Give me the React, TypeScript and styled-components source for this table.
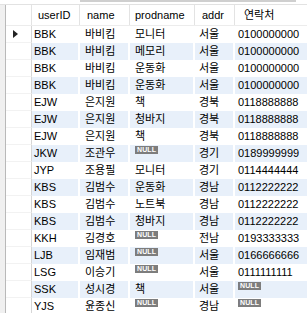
import React from "react";
import styled, { createGlobalStyle } from "styled-components";

const GlobalStyle = createGlobalStyle`
  html, body {
    margin: 0;
    padding: 0;
    background: #ffffff;
    overflow: hidden;
  }
  body {
    font-family: "Liberation Sans", "Noto Sans CJK KR", sans-serif;
    font-size: 11px;
    color: #000;
  }
`;

const TEMPLATE = "26px 48px 50px 65px 40px 1fr";

const Frame = styled.div`
  width: 307px;
  height: 313px;
  display: flex;
  flex-direction: column;
  overflow: hidden;
`;

const TopEdge = styled.div`
  height: 4px;
  flex-shrink: 0;
  display: flex;
  border-bottom: 1px solid #e2e2e2;
  background: #ffffff;
`;

const ScrollThumb = styled.div`
  margin-left: 80px;
  width: 216px;
  height: 2px;
  background: #cfcfcf;
`;

const Body = styled.div`
  flex: 1;
  display: flex;
  min-height: 0;
`;

const LeftStrip = styled.div`
  width: 5px;
  flex-shrink: 0;
  background: #f0f0f0;
  border-right: 1px solid #b9b9b9;
`;

const Grid = styled.div`
  flex: 1;
  display: flex;
  flex-direction: column;
  min-width: 0;
`;

const HeaderRow = styled.div`
  display: grid;
  grid-template-columns: ${TEMPLATE};
  height: 21px;
  flex-shrink: 0;
  background: #ffffff;
  border-bottom: 1px solid #ececec;
  box-sizing: border-box;
`;

const HeaderCell = styled.div<{ $pad: number }>`
  padding-left: ${(p) => p.$pad}px;
  line-height: 20px;
  white-space: nowrap;
  overflow: hidden;
  border-right: 1px solid #e3e3e3;

  &:last-child {
    border-right: none;
  }
`;

const Row = styled.div<{ $alt: boolean }>`
  display: grid;
  grid-template-columns: ${TEMPLATE};
  height: 17px;
  flex-shrink: 0;
  background: ${(p) => (p.$alt ? "#e8f0fa" : "#ffffff")};
`;

const RowHead = styled.div`
  background: #ffffff;
  border-right: 1px solid #d6d6d6;
  border-bottom: 1px solid #f2f2f2;
  box-sizing: border-box;
  display: flex;
  align-items: center;
  padding-left: 7px;
`;

const Cell = styled.div<{ $pad: number }>`
  padding-left: ${(p) => p.$pad}px;
  line-height: 17px;
  white-space: nowrap;
  overflow: hidden;
  border-right: 2px solid #ffffff;
  box-sizing: border-box;

  &:last-child {
    border-right: none;
  }
`;

const NullBadge = styled.span`
  display: inline-block;
  vertical-align: top;
  margin-top: 1px;
  height: 8px;
  padding: 0 2px;
  background: #7d7d7d;
  color: #ffffff;
  font-family: "Liberation Sans", sans-serif;
  font-weight: bold;
  font-size: 7px;
  line-height: 8px;
  letter-spacing: 0.1px;
`;

type Col = { key: string; label: string; head: number; cell: number };

const columns: Col[] = [
  { key: "userID", label: "userID", head: 6, cell: 2 },
  { key: "name", label: "name", head: 7, cell: 5 },
  { key: "prodname", label: "prodname", head: 5, cell: 5 },
  { key: "addr", label: "addr", head: 7, cell: 4 },
  { key: "phone", label: "연락처", head: 9, cell: 3 },
];

type Rec = Record<string, string | null>;

const rows: Rec[] = [
  { userID: "BBK", name: "바비킴", prodname: "모니터", addr: "서울", phone: "0100000000" },
  { userID: "BBK", name: "바비킴", prodname: "메모리", addr: "서울", phone: "0100000000" },
  { userID: "BBK", name: "바비킴", prodname: "운동화", addr: "서울", phone: "0100000000" },
  { userID: "BBK", name: "바비킴", prodname: "운동화", addr: "서울", phone: "0100000000" },
  { userID: "EJW", name: "은지원", prodname: "책", addr: "경북", phone: "0118888888" },
  { userID: "EJW", name: "은지원", prodname: "청바지", addr: "경북", phone: "0118888888" },
  { userID: "EJW", name: "은지원", prodname: "책", addr: "경북", phone: "0118888888" },
  { userID: "JKW", name: "조관우", prodname: null, addr: "경기", phone: "0189999999" },
  { userID: "JYP", name: "조용필", prodname: "모니터", addr: "경기", phone: "0114444444" },
  { userID: "KBS", name: "김범수", prodname: "운동화", addr: "경남", phone: "0112222222" },
  { userID: "KBS", name: "김범수", prodname: "노트북", addr: "경남", phone: "0112222222" },
  { userID: "KBS", name: "김범수", prodname: "청바지", addr: "경남", phone: "0112222222" },
  { userID: "KKH", name: "김경호", prodname: null, addr: "전남", phone: "0193333333" },
  { userID: "LJB", name: "임재범", prodname: null, addr: "서울", phone: "0166666666" },
  { userID: "LSG", name: "이승기", prodname: null, addr: "서울", phone: "0111111111" },
  { userID: "SSK", name: "성시경", prodname: "책", addr: "서울", phone: null },
  { userID: "YJS", name: "윤종신", prodname: null, addr: "경남", phone: null },
];

const CurrentMark = () => (
  <svg width="5" height="8" viewBox="0 0 5 8">
    <polygon points="0,0 5,4 0,8" fill="#222" />
  </svg>
);

const App: React.FC = () => {
  return (
    <>
      <GlobalStyle />
      <Frame>
        <TopEdge>
          <ScrollThumb />
        </TopEdge>
        <Body>
          <LeftStrip />
          <Grid>
            <HeaderRow>
              <HeaderCell $pad={0} />
              {columns.map((c) => (
                <HeaderCell key={c.key} $pad={c.head}>
                  {c.label}
                </HeaderCell>
              ))}
            </HeaderRow>
            {rows.map((r, i) => (
              <Row key={i} $alt={i % 2 === 1}>
                <RowHead>{i === 0 && <CurrentMark />}</RowHead>
                {columns.map((c) => (
                  <Cell key={c.key} $pad={c.cell}>
                    {r[c.key] === null ? <NullBadge>NULL</NullBadge> : r[c.key]}
                  </Cell>
                ))}
              </Row>
            ))}
          </Grid>
        </Body>
      </Frame>
    </>
  );
};

export default App;
